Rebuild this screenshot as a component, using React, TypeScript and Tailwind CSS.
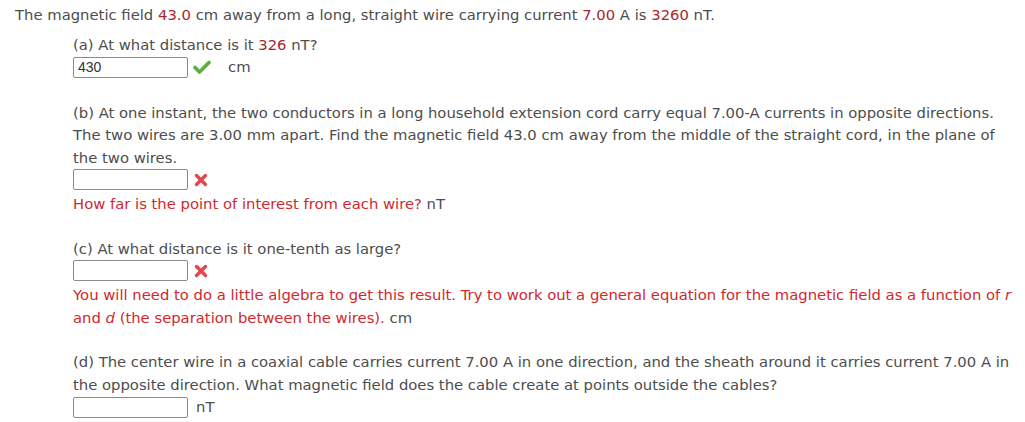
import React from 'react';

const num = 'text-[#a8262b]';

function Check() {
  return (
    <svg width="18" height="16" viewBox="0 0 18 16" className="ml-[5px]">
      <path d="M2 8.5 L6.5 13 L16 3.5" fill="none" stroke="#5cae3f" strokeWidth="3.6" strokeLinecap="round" strokeLinejoin="round" />
    </svg>
  );
}

function Cross() {
  return (
    <svg width="14" height="14" viewBox="0 0 14 14" className="ml-[6px]">
      <path d="M2.5 2.5 L11.5 11.5 M11.5 2.5 L2.5 11.5" stroke="#e0474f" strokeWidth="3.4" strokeLinecap="round" />
    </svg>
  );
}

function Box({ value = '' }: { value?: string }) {
  return (
    <div className="w-[115px] h-[21px] border border-[#8a8a8a] rounded-[2px] bg-white px-[4px] flex items-center text-[14px] text-[#333] font-['Liberation_Sans',Arial,sans-serif]">
      {value}
    </div>
  );
}

export default function App() {
  return (
    <div className="bg-white w-[1025px] h-[422px] overflow-hidden pl-[15px] pr-[4px] pt-[4px] text-[14.8px] leading-[22.5px] text-[#4d4d4d] font-['DejaVu_Sans',Verdana,sans-serif]">
      <p>
        The magnetic field <span className={num}>43.0</span> cm away from a long, straight wire carrying current{' '}
        <span className={num}>7.00</span> A is <span className={num}>3260</span> nT.
      </p>

      <div className="ml-[58px] mt-[7px]">
        <p>
          (a) At what distance is it <span className={num}>326</span> nT?
        </p>
        <div className="flex items-center">
          <Box value="430" />
          <Check />
          <span className="ml-[17px]">cm</span>
        </div>

        <p className="mt-[23px]">
          (b) At one instant, the two conductors in a long household extension cord carry equal 7.00-A currents in opposite directions.
          The two wires are 3.00 mm apart. Find the magnetic field 43.0 cm away from the middle of the straight cord, in the plane of
          the two wires.
        </p>
        <div className="flex items-center">
          <Box />
          <Cross />
        </div>
        <p className="mt-[3px] text-[#d0282e]">
          How far is the point of interest from each wire? <span className="text-[#4d4d4d]">nT</span>
        </p>

        <p className="mt-[22px]">(c) At what distance is it one-tenth as large?</p>
        <div className="flex items-center">
          <Box />
          <Cross />
        </div>
        <p className="mt-[3px] text-[#d0282e]">
          You will need to do a little algebra to get this result. Try to work out a general equation for the magnetic field as a function of{' '}
          <i>r</i> and <i>d</i> (the separation between the wires). <span className="text-[#4d4d4d]">cm</span>
        </p>

        <p className="mt-[22px]">
          (d) The center wire in a coaxial cable carries current 7.00 A in one direction, and the sheath around it carries current 7.00 A in
          the opposite direction. What magnetic field does the cable create at points outside the cables?
        </p>
        <div className="flex items-center">
          <Box />
          <span className="ml-[8px]">nT</span>
        </div>
      </div>
    </div>
  );
}
